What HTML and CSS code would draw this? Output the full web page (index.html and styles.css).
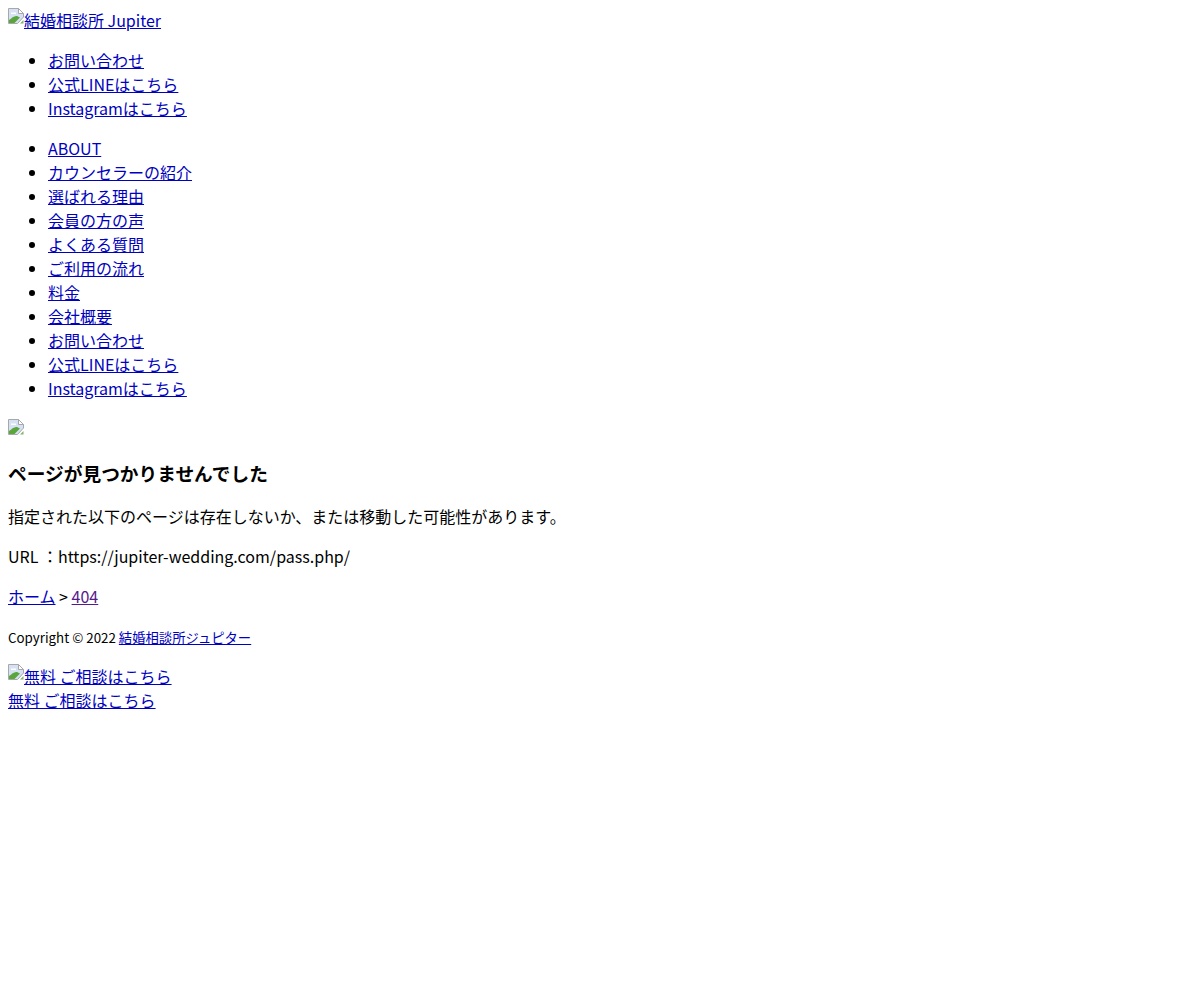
FILE: index.html
```html
<!DOCTYPE html>
<html lang="ja">
<head>
<meta charset="utf-8">
<title>404</title>
<link rel="stylesheet" href="styles.css">
</head>
<body>
<header>
<a href="#a"><svg class="broken raised" width="16" height="16" viewBox="0 0 16 16"><path d="M.5.5h10l5 5V9l-6 6.500H.5z" fill="#d6e1f4" stroke="#a8a8a8"/><path d="M10.500.5v5h5z" fill="#fff" stroke="#a8a8a8"/><path d="M3 4.500h5V6H3z" fill="#fff"/><path d="M1 15v-3C4 10 6 7.500 9 8l3 1.500-5.500 5.500z" fill="#5aa63c"/><path d="M15.500 12v3.500H12z" fill="#7fb568"/></svg>結婚相談所 Jupiter</a>
<ul>
<li><a href="#a">お問い合わせ</a></li>
<li><a href="#a">公式LINEはこちら</a></li>
<li><a href="#a">Instagramはこちら</a></li>
</ul>
<ul>
<li><a href="#a">ABOUT</a></li>
<li><a href="#a">カウンセラーの紹介</a></li>
<li><a href="#a">選ばれる理由</a></li>
<li><a href="#a">会員の方の声</a></li>
<li><a href="#a">よくある質問</a></li>
<li><a href="#a">ご利用の流れ</a></li>
<li><a href="#a">料金</a></li>
<li><a href="#a">会社概要</a></li>
<li><a href="#a">お問い合わせ</a></li>
<li><a href="#a">公式LINEはこちら</a></li>
<li><a href="#a">Instagramはこちら</a></li>
</ul>
</header>
<main>
<svg class="broken" width="16" height="16" viewBox="0 0 16 16"><path d="M.5.5h10l5 5V9l-6 6.500H.5z" fill="#d6e1f4" stroke="#a8a8a8"/><path d="M10.500.5v5h5z" fill="#fff" stroke="#a8a8a8"/><path d="M3 4.500h5V6H3z" fill="#fff"/><path d="M1 15v-3C4 10 6 7.500 9 8l3 1.500-5.500 5.500z" fill="#5aa63c"/><path d="M15.500 12v3.500H12z" fill="#7fb568"/></svg>
<h3>ページが見つかりませんでした</h3>
<p>指定された以下のページは存在しないか、または移動した可能性があります。</p>
<p>URL ：https://jupiter-wedding.com/pass.php/</p>
<p><a href="#a">ホーム</a> &gt; <a class="visited" href="#a">404</a></p>
</main>
<footer>
<p><small class="copy">Copyright © 2022 <a href="#a">結婚相談所ジュピター</a></small></p>
<div><a href="#a"><svg class="broken raised" width="16" height="16" viewBox="0 0 16 16"><path d="M.5.5h10l5 5V9l-6 6.500H.5z" fill="#d6e1f4" stroke="#a8a8a8"/><path d="M10.500.5v5h5z" fill="#fff" stroke="#a8a8a8"/><path d="M3 4.500h5V6H3z" fill="#fff"/><path d="M1 15v-3C4 10 6 7.500 9 8l3 1.500-5.500 5.500z" fill="#5aa63c"/><path d="M15.500 12v3.500H12z" fill="#7fb568"/></svg>無料 ご相談はこちら</a></div>
<div><a href="#a">無料 ご相談はこちら</a></div>
</footer>
</body>
</html>
```
FILE: styles.css
```css
body {
  margin: 8px;
  font-family: "Noto Sans CJK JP", sans-serif;
  font-size: 16px;
  line-height: 24px;
  color: #000;
  background: #fff;
}
a { color: #0000c0; }
a.visited { color: #551a8b; }
ul { margin: 16px 0; padding-left: 40px; }
h3 { font-size: 18.72px; font-weight: 700; margin: 18.72px 0; line-height: 27px; }
p { margin: 16px 0; }
.copy { font-size: 13.33px; line-height: 1; }
.broken { vertical-align: baseline; }
.raised { vertical-align: 3px; }
```
